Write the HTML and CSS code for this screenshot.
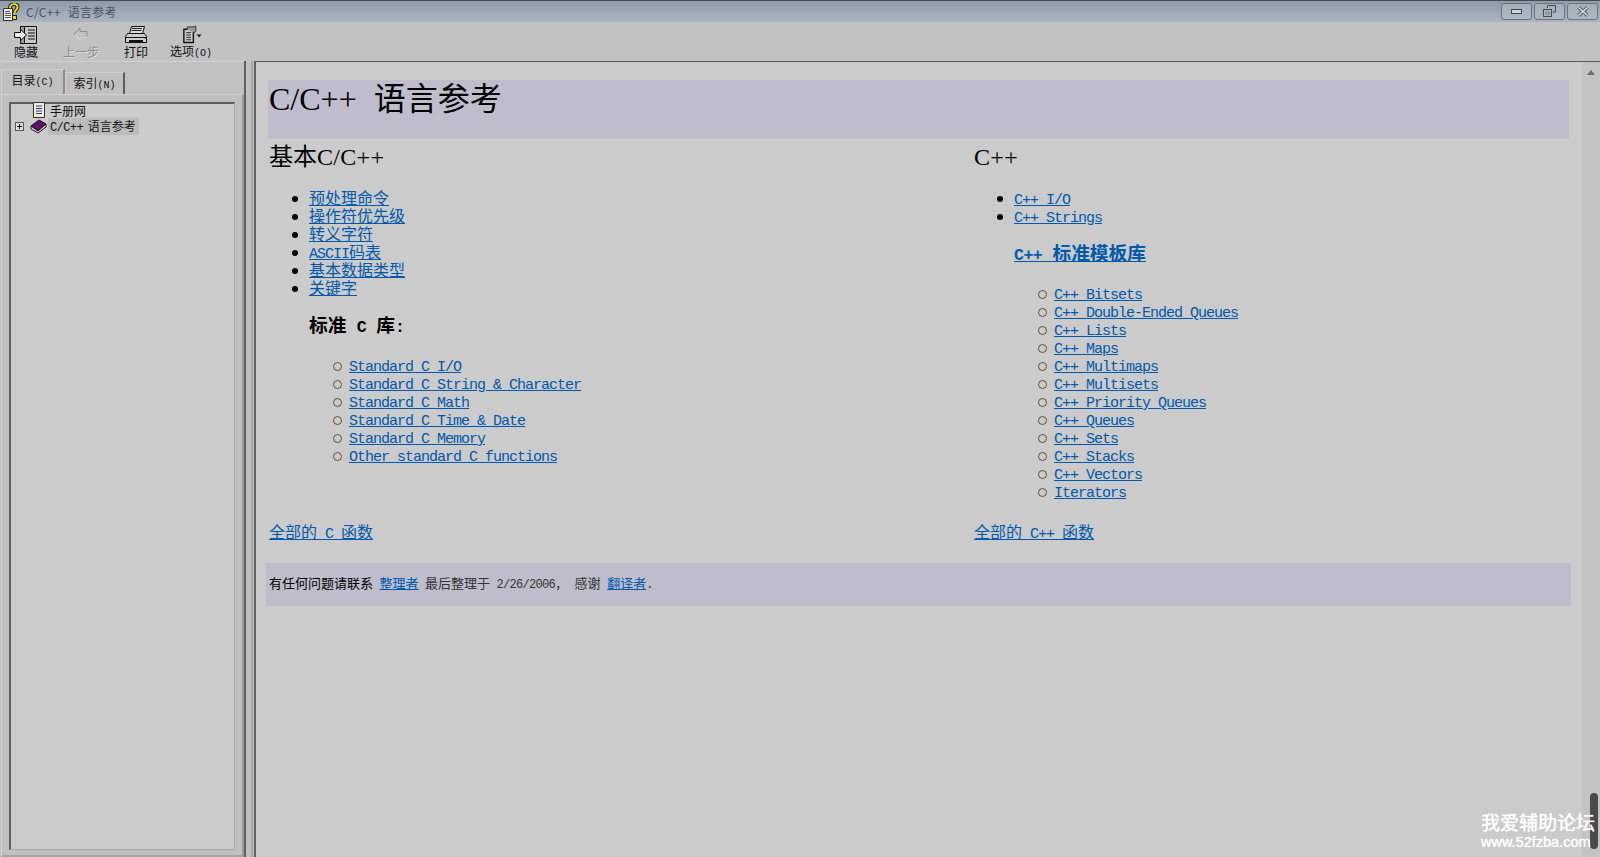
FILE: index.html
```html
<!DOCTYPE html>
<html lang="zh-CN">
<head>
<meta charset="utf-8">
<title>C/C++ 语言参考</title>
<link rel="stylesheet" href="styles.css">
</head>
<body>
<div class="window">
  <header class="titlebar">
    <svg class="app-icon" width="18" height="18" viewBox="0 0 18 18"><path d="M1.500 5.500h9v12h-9z" fill="#eee" stroke="#333"/><path d="M3 8.500h5M3 10.500h6M3 12.500h6M3 14.500h6" stroke="#555"/><path d="M8 5c0-5 7.500-5 7.500-1 0 3-3 3-3 6" fill="none" stroke="#222" stroke-width="4"/><path d="M8 5c0-5 7.500-5 7.500-1 0 3-3 3-3 6" fill="none" stroke="#f2d21f" stroke-width="2"/><rect x="10.500" y="12.500" width="4" height="4" fill="#f2d21f" stroke="#222"/></svg>
    <span class="title-text">C/C++ 语言参考</span>
    <div class="win-buttons">
      <div class="win-btn"><svg width="12" height="6" viewBox="0 0 12 6"><rect x=".5" y=".5" width="10" height="4" fill="#d0d3d6" stroke="#454a50"/></svg></div>
      <div class="win-btn"><svg width="13" height="13" viewBox="0 0 13 13"><path d="M4.500 3V.5h8V7H9.500" fill="none" stroke="#454a50"/><rect x=".5" y="4.500" width="8" height="7" fill="#aeb6bd" stroke="#454a50"/><rect x="3" y="7" width="3" height="2" fill="#d5d8da" stroke="#454a50" stroke-width=".6"/></svg></div>
      <div class="win-btn"><svg width="12" height="11" viewBox="0 0 12 11"><path d="M1.500 1.500l9 8M10.500 1.500l-9 8" stroke="#50555a" stroke-width="3.600"/><path d="M1.500 1.500l9 8M10.500 1.500l-9 8" stroke="#dcdee0" stroke-width="1.600"/></svg></div>
    </div>
  </header>

  <nav class="toolbar">
    <div class="tool tool-hide">
      <svg width="24" height="20" viewBox="0 0 24 20"><path d="M6.500 1.500h16v17h-16z" fill="#c8c8c8" stroke="#111"/><path d="M6.500 1.500h4v17h-4z" fill="#9a9a9a" stroke="#111"/><path d="M14 5h7M14 8h7M14 11h7M14 14h7" stroke="#111"/><path d="M.5 7.500h6V4.500l6 5.500-6 5.500v-3h-6z" fill="#eee" stroke="#111"/></svg>
      <span>隐藏</span>
    </div>
    <div class="tool tool-back is-off">
      <svg width="24" height="20" viewBox="0 0 24 20"><path d="M5 9l6-6v3.500h7v5h-7V15z" fill="none" stroke="#8d8d8d"/><path d="M6 10l5 5V12h7.500" fill="none" stroke="#e2e2e2"/></svg>
      <span>上一步</span>
    </div>
    <div class="tool tool-print">
      <svg width="24" height="20" viewBox="0 0 24 20"><path d="M7.500 1.500h13l-2 7h-13z" fill="#ddd" stroke="#111"/><path d="M8 3.500h10M7.500 5.500h10" stroke="#222"/><path d="M3.500 8.500h17l2 3v6H1.500v-6z" fill="#cfcfcf" stroke="#111"/><path d="M2 12.500h20" stroke="#111"/><path d="M5 15h14v3H5z" fill="#111"/><path d="M20 13h2v1h-2z" fill="#2bb7c8"/></svg>
      <span>打印</span>
    </div>
    <div class="tool tool-options">
      <svg width="24" height="20" viewBox="0 0 24 20"><path d="M4.500 4.500h10v14h-10z" fill="#ccc" stroke="#111" stroke-width="1.500"/><path d="M7 8h5M7 10.500h5M7 13h5M7 15.500h5" stroke="#222"/><path d="M8 5V2h7l2-1v6l-2 1" fill="#999" stroke="#333"/><path d="M18 10h5l-2.500 3z" fill="#111"/></svg>
      <span>选项<i class="hot">(O)</i></span>
    </div>
  </nav>

  <div class="panes">
    <aside class="side">
      <div class="tabs">
        <div class="tab tab-on">目录<i class="hot">(C)</i></div>
        <div class="tab">索引<i class="hot">(N)</i></div>
      </div>
      <div class="tab-panel">
        <div class="tree">
          <div class="tree-row row-leaf">
            <svg width="12" height="16" viewBox="0 0 12 16"><path d="M.5.5h11v15H.5z" fill="#f1ecd0" stroke="#333"/><path d="M3 4h6M3 6.500h6M3 9h6M3 11.500h6" stroke="#2432a8"/></svg>
            <span>手册网</span>
          </div>
          <div class="tree-row row-book">
            <span class="expander"><svg width="9" height="9" viewBox="0 0 9 9"><rect x=".5" y=".5" width="8" height="8" fill="#ddd" stroke="#555"/><path d="M2 4.500h5M4.500 2v5" stroke="#111"/></svg></span>
            <svg width="17" height="15" viewBox="0 0 17 15"><path d="M1 7l8-6 7 4-8 7z" fill="#5e0f66" stroke="#1c0520"/><path d="M1 7v3l7 4 8-6V5l-8 7z" fill="#e0dcd4" stroke="#1c0520"/></svg>
            <span class="tree-sel"><b class="tl">C/C++</b> 语言参考</span>
          </div>
        </div>
      </div>
    </aside>
    <div class="gutter"></div>

    <main class="doc">
      <div class="doc-body">
        <h1 class="page-title"><span class="lat">C/C++</span> 语言参考</h1>
        <div class="cols">
          <section class="col col-a">
            <h2><span>基本</span><span class="lat">C/C++</span></h2>
            <ul class="l1">
              <li><a href="#">预处理命令</a></li>
              <li><a href="#">操作符优先级</a></li>
              <li><a href="#">转义字符</a></li>
              <li><a href="#"><span class="lat">ASCII</span>码表</a></li>
              <li><a href="#">基本数据类型</a></li>
              <li><a href="#">关键字</a></li>
            </ul>
            <h3 class="sub">标准 <span class="lat">C</span> 库<span class="lat">:</span></h3>
            <ul class="l2">
              <li><a href="#" class="lat">Standard C I/O</a></li>
              <li><a href="#" class="lat">Standard C String &amp; Character</a></li>
              <li><a href="#" class="lat">Standard C Math</a></li>
              <li><a href="#" class="lat">Standard C Time &amp; Date</a></li>
              <li><a href="#" class="lat">Standard C Memory</a></li>
              <li><a href="#" class="lat">Other standard C functions</a></li>
            </ul>
          </section>
          <section class="col col-b">
            <h2><span class="lat">C++</span></h2>
            <ul class="l1">
              <li><a href="#" class="lat">C++ I/O</a></li>
              <li><a href="#" class="lat">C++ Strings</a></li>
            </ul>
            <h3 class="sub sub-link"><a href="#"><span class="lat">C++</span> 标准模板库</a></h3>
            <ul class="l2">
              <li><a href="#" class="lat">C++ Bitsets</a></li>
              <li><a href="#" class="lat">C++ Double-Ended Queues</a></li>
              <li><a href="#" class="lat">C++ Lists</a></li>
              <li><a href="#" class="lat">C++ Maps</a></li>
              <li><a href="#" class="lat">C++ Multimaps</a></li>
              <li><a href="#" class="lat">C++ Multisets</a></li>
              <li><a href="#" class="lat">C++ Priority Queues</a></li>
              <li><a href="#" class="lat">C++ Queues</a></li>
              <li><a href="#" class="lat">C++ Sets</a></li>
              <li><a href="#" class="lat">C++ Stacks</a></li>
              <li><a href="#" class="lat">C++ Vectors</a></li>
              <li><a href="#" class="lat">Iterators</a></li>
            </ul>
          </section>
        </div>
        <div class="all-links">
          <div class="all-cell"><a href="#">全部的 <span class="lat">C</span> 函数</a></div>
          <div class="all-cell"><a href="#">全部的 <span class="lat">C++</span> 函数</a></div>
        </div>
        <footer class="foot"><span class="foot-dark">有任何问题请联系</span> <a href="#">整理者</a> 最后整理于 <span class="lat">2/26/2006</span>， 感谢 <a href="#">翻译者</a><span class="lat">.</span></footer>
      </div>
      <div class="vscroll">
        <svg class="sb-up" width="8" height="5" viewBox="0 0 8 5"><path d="M4 0l4 5H0z" fill="#6d6d6d"/></svg>
      </div>
    </main>
  </div>
</div>
<div class="thumb"></div>
<div class="watermark"><div class="wm-cn">我爱辅助论坛</div><div class="wm-url">www.52fzba.com</div></div>
</body>
</html>
```

FILE: styles.css
```css
* { box-sizing: border-box; }
html, body { margin: 0; height: 100%; overflow: hidden; }
body {
  position: relative;
  font-family: "Noto Sans CJK SC", sans-serif;
  background: #cbcbcb;
  color: #000;
}
.window { display: flex; flex-direction: column; height: 857px; }

.titlebar {
  height: 22px;
  display: flex;
  align-items: center;
  border-top: 1px solid #4a4a4c;
  background: linear-gradient(#8e9caa, #aab5bf);
  padding-left: 2px;
}
.app-icon { flex: none; }
.title-text { margin-left: 6px; font-size: 12px; color: #4b515a; letter-spacing: .3px; word-spacing: 4px; }
.win-buttons { margin-left: auto; display: flex; gap: 2px; padding-right: 2px; }
.win-btn {
  width: 31px; height: 17px;
  border: 1px solid #6a7482;
  border-radius: 3px;
  background: linear-gradient(#a4afb9, #aeb8c0);
  display: flex; align-items: center; justify-content: center;
}

.toolbar {
  height: 39px;
  display: flex;
  background: #c2c2c2;
  font-size: 12px;
  line-height: 14px;
}
.tool { display: flex; flex-direction: column; align-items: center; padding-top: 3px; }
.tool svg { height: 20px; }
.tool span { color: #111; white-space: nowrap; }
.tool-hide { width: 24px; margin-left: 14px; }
.tool-back { width: 36px; margin-left: 25px; }
.tool-print { width: 24px; margin-left: 25px; }
.tool-options { width: 42px; margin-left: 22px; }
.is-off span { color: #8c8c8c; text-shadow: 1px 1px 0 #dcdcdc; }
.hot { font-style: normal; font-size: 10px; font-family: "Liberation Mono", monospace; }

.panes { flex: 1; display: flex; min-height: 0; }
.side { width: 244px; background: #c0c0c0; border-top: 1px solid #d2d2d2; padding-top: 7px; flex: none; }
.tabs { display: flex; height: 25px; align-items: flex-end; padding-left: 1px; font-size: 12px; }
.tab {
  width: 60px; height: 22px;
  border: 1px solid #d2d2d2;
  border-right: 2px solid #5d5d5d;
  border-bottom: 0;
  text-align: center; line-height: 20px;
  color: #111;
}
.tab-on { width: 64px; height: 25px; line-height: 20px; border-right: 2px solid #8a8a8a; }
.tab-panel { height: 763px; margin-left: 1px; border: 1px solid #d2d2d2; border-right: 2px solid #9a9a9a; border-bottom: 2px solid #a5a5a5; padding: 7px 7px 0 7px; }
.tree { height: 748px; background: #cbcbcb; border: 1px solid #a9a9a9; border-left: 2px solid #5e5e5e; border-top: 2px solid #5e5e5e; font-size: 12px; }
.tree-row { height: 16px; display: flex; align-items: center; color: #111; white-space: nowrap; }
.row-leaf { padding-left: 22px; margin-top: -2px; }
.row-leaf span { margin-left: 5px; }
.row-book { padding-left: 4px; }
.expander { width: 15px; display: flex; flex: none; }
.tree-sel { background: #bcbcbc; margin-left: 1px; padding: 0 3px 0 2px; line-height: 15px; word-spacing: 2px; }
.tl { font: 12px "Liberation Mono", monospace; letter-spacing: -.6px; }

.gutter { width: 12px; flex: none; background: linear-gradient(90deg, #c0c0c0 0 5px, #a6a6a6 5px 7px, #c0c0c0 7px); border-left: 2px solid #5f5f5f; border-right: 2px solid #5f5f5f; }

.doc { flex: 1; display: flex; background: #cbcbcb; border-top: 1px solid #5a5a5a; min-width: 0; }
.doc-body { flex: 1; min-width: 0; padding: 18px 13px 0 12px; font-size: 16px; line-height: 18px; word-spacing: 4.4px; }
.vscroll { width: 18px; background: #c3c3c3; flex: none; display: flex; justify-content: center; padding-top: 8px; }
.sb-up { display: block; }

.lat { font-family: "Liberation Mono", monospace; font-size: 15px; letter-spacing: -1px; word-spacing: 0; }
a { color: #0059ad; text-decoration: underline; }

.page-title { margin: 0; height: 59px; padding: 0 1px; background: #bfbdcb; font-size: 32px; font-weight: 400; line-height: 33px; word-spacing: 10px; }
.page-title .lat { font-family: "Liberation Serif", serif; font-size: 32px; letter-spacing: 0; }

.cols { display: flex; }
.col { padding-left: 1px; }
.col-a { width: 705px; }
h2 { margin: 2px 0 0; font-size: 24px; line-height: 28px; font-weight: 400; height: 28px; }
h2 .lat { font-family: "Liberation Serif", serif; font-size: 24px; letter-spacing: .3px; }
ul { list-style: none; margin: 0; padding: 0; }
.l1 { margin-top: 19px; padding-left: 40px; }
.l2 { margin-top: 21px; padding-left: 80px; }
li { height: 18px; position: relative; white-space: nowrap; }
.l1 li::before { content: ""; position: absolute; left: -17px; top: 8px; width: 6px; height: 6px; background: #000; border-radius: 50%; }
.l2 li::before { content: ""; position: absolute; left: -16px; top: 7px; width: 7px; height: 7px; border: 1px solid #6b4d2a; border-radius: 50%; }
.sub { margin: 18px 0 0 40px; height: 20px; font-size: 18.72px; line-height: 20px; font-weight: 700; word-spacing: 6px; }
.sub .lat { font-size: 16.5px; font-weight: 700; letter-spacing: -.5px; }

.all-links { display: grid; grid-template-columns: 705px 1fr; margin-top: 23px; padding-left: 1px; height: 20px; }

.foot { margin: 21px -2px 0; height: 43px; padding-left: 3px; background: #bfbdcb; font-size: 13px; line-height: 40px; color: #333; white-space: nowrap; word-spacing: 3.6px; }
.foot-dark { color: #000; }
.foot .lat { font-size: 12px; letter-spacing: -.7px; }

.thumb { position: absolute; left: 1590px; top: 793px; width: 8px; height: 56px; background: #4a4a4a; border-radius: 4px; }
.watermark { position: absolute; left: 1481px; top: 810px; color: #fff; text-shadow: 0 0 1px #fff; }
.wm-cn { font-size: 19px; line-height: 24px; }
.wm-url { font-family: "Liberation Sans", sans-serif; font-size: 14.5px; line-height: 17px; }
```
